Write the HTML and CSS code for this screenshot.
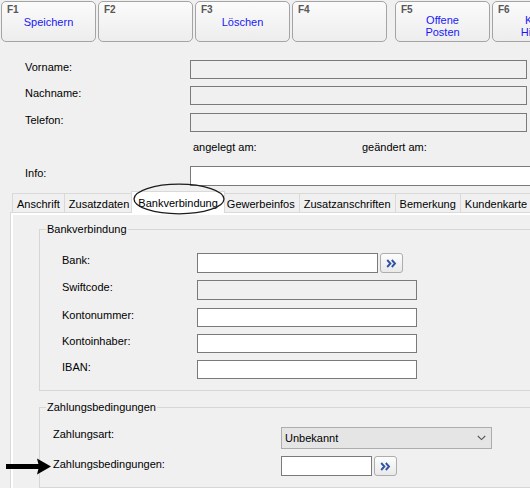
FILE: index.html
```html
<!DOCTYPE html>
<html lang="de">
<head>
<meta charset="utf-8">
<title>Kunde</title>
<link rel="stylesheet" href="styles.css">
</head>
<body>
<div class="toolbar">
  <div class="fbtn"><span class="fkey">F1</span><span class="flabel">Speichern</span></div>
  <div class="fbtn"><span class="fkey">F2</span></div>
  <div class="fbtn"><span class="fkey">F3</span><span class="flabel">Löschen</span></div>
  <div class="fbtn"><span class="fkey">F4</span></div>
  <div class="fbtn sep"><span class="fkey">F5</span><span class="flabel two">Offene<br>Posten</span></div>
  <div class="fbtn"><span class="fkey">F6</span><span class="flabel two">Konto<br>Historie</span></div>
</div>

<div class="head">
  <div class="row"><span class="lbl">Vorname:</span><input class="box ro w-head" type="text"></div>
  <div class="row m7"><span class="lbl">Nachname:</span><input class="box ro w-head" type="text"></div>
  <div class="row m8"><span class="lbl">Telefon:</span><input class="box ro w-head" type="text"></div>
  <div class="row dates"><span class="date">angelegt am:</span><span>geändert am:</span></div>
  <div class="row info"><span class="lbl">Info:</span><input class="box h20 w-info" type="text"></div>
</div>

<div class="tabs">
  <div class="tabstrip">
    <div class="tab">Anschrift</div>
    <div class="tab">Zusatzdaten</div>
    <div class="tab active">Bankverbindung
      <svg class="ring" width="92" height="32" viewBox="0 0 92 32"><ellipse cx="46" cy="16" rx="45" ry="14.8" fill="none" stroke="#1c1c1c" stroke-width="1.3"/></svg>
    </div>
    <div class="tab">Gewerbeinfos</div>
    <div class="tab">Zusatzanschriften</div>
    <div class="tab">Bemerkung</div>
    <div class="tab">Kundenkarte</div>
  </div>
  <div class="panel">
    <div class="page">
      <fieldset class="group g1">
        <legend>Bankverbindung</legend>
        <div class="row first"><span class="lbl">Bank:</span><input class="box h20 w-bank" type="text"><span class="more"><svg width="11" height="9" viewBox="0 0 11 9"><path d="M1.2 1 L4.4 4.5 L1.2 8 M5.8 1 L9 4.5 L5.8 8" fill="none" stroke="#3152a6" stroke-width="1.9"/></svg></span></div>
        <div class="row m7"><span class="lbl">Swiftcode:</span><input class="box ro h20 w-long" type="text"></div>
        <div class="row m8"><span class="lbl">Kontonummer:</span><input class="box w-long" type="text"></div>
        <div class="row m7"><span class="lbl">Kontoinhaber:</span><input class="box w-long" type="text"></div>
        <div class="row m7"><span class="lbl">IBAN:</span><input class="box w-long" type="text"></div>
      </fieldset>
      <fieldset class="group g2">
        <legend>Zahlungsbedingungen</legend>
        <div class="row first"><span class="lbl">Zahlungsart:</span><div class="combo"><span>Unbekannt</span><svg width="9" height="6" viewBox="0 0 9 6"><path d="M0.8 1 L4.5 4.6 L8.2 1" fill="none" stroke="#555" stroke-width="1.1"/></svg></div></div>
        <div class="row m7 marked"><span class="lbl low">Zahlungsbedingungen:</span><input class="box h20 w-short" type="text"><span class="more"><svg width="11" height="9" viewBox="0 0 11 9"><path d="M1.2 1 L4.4 4.5 L1.2 8 M5.8 1 L9 4.5 L5.8 8" fill="none" stroke="#3152a6" stroke-width="1.9"/></svg></span>
          <svg class="arrow" width="47" height="17" viewBox="0 0 47 17"><rect x="1" y="6" width="34" height="5" fill="#000"/><polygon points="32,0.5 46,8.5 32,16.5 34,8.5" fill="#000"/></svg>
        </div>
      </fieldset>
    </div>
  </div>
</div>
</body>
</html>
```

FILE: styles.css
```css
html, body {
  margin: 0;
  overflow: hidden;
}

body {
  width: 530px;
  height: 488px;
  background: #f0f0f0;
  color: #000;
  font-family: "Liberation Sans", Arial, sans-serif;
  font-size: 11px;
  line-height: 12px;
}

/* ---------- function key toolbar ---------- */
.toolbar {
  display: flex;
  gap: 2px;
  padding: 1px 0 0 1px;
}

.fbtn {
  flex: none;
  width: 95px;
  height: 41px;
  box-sizing: border-box;
  border: 1px solid #a4a4a4;
  border-radius: 5px;
  background: linear-gradient(#fbfbfb, #ededed);
  display: flex;
  flex-direction: column;
  align-items: center;
  padding-top: 2px;
}

.fbtn.sep {
  margin-left: 6px;
}

.fkey {
  align-self: flex-start;
  margin-left: 5px;
  font-size: 10px;
  font-weight: bold;
  color: #575757;
  line-height: 12px;
}

.flabel {
  color: #1818f5;
  text-align: center;
  line-height: 12px;
  white-space: nowrap;
}

.flabel.two {
  margin-top: -2px;
}

/* ---------- header fields ---------- */
.head {
  margin-top: 18px;
  padding-left: 25px;
}

.row {
  display: flex;
  align-items: flex-start;
}

.m7 { margin-top: 7px; }
.m8 { margin-top: 8px; }

.lbl {
  flex: none;
  padding-top: 1px;
  white-space: nowrap;
}

.head .lbl {
  width: 165px;
}

.dates {
  margin-top: 9px;
  padding-left: 168px;
}

.date {
  width: 169px;
}

.info {
  margin-top: 13px;
}

.box {
  display: block;
  flex: none;
  box-sizing: border-box;
  height: 19px;
  margin: 0;
  padding: 0;
  border: 1px solid #7a7a7a;
  border-radius: 0;
  background: #fff;
  font: inherit;
  outline: none;
}

.box.ro {
  background: #f0f0f0;
}

.box.h20 {
  height: 20px;
}

.w-head { width: 337px; }
.w-info { width: 400px; }
.w-bank { width: 181px; }
.w-long { width: 220px; }
.w-short { width: 91px; }

/* ---------- tabs ---------- */
.tabs {
  margin-top: 5px;
  margin-left: 10px;
}

.tabstrip {
  display: flex;
  align-items: flex-end;
  padding-left: 2px;
  position: relative;
  z-index: 2;
}

.tab {
  flex: none;
  height: 19px;
  box-sizing: border-box;
  border: 1px solid #d9d9d9;
  border-bottom: 0;
  padding: 4px 4px 0;
  background: #f0f0f0;
  white-space: nowrap;
}

.tab + .tab {
  margin-left: -1px;
}

.tab.active {
  position: relative;
  z-index: 1;
  height: 22px;
  margin: 0 -2px -1px -3px;
  padding: 5px 6px 0;
  background: #fff;
}

.ring {
  position: absolute;
  left: 1px;
  top: -9px;
  overflow: visible;
}

.panel {
  width: 600px;
  height: 320px;
  border: 1px solid #d9d9d9;
  background: #fff;
  padding: 2px;
}

.page {
  height: 100%;
  box-sizing: border-box;
  background: #f0f0f0;
  padding-top: 8px;
}

/* ---------- group boxes ---------- */
.group {
  width: 540px;
  min-width: 0;
  margin: 0 0 0 26px;
  padding: 0 0 11px;
  border: 1px solid #d6d6d6;
}

.group legend {
  margin-left: 6px;
  padding: 0 1px;
  line-height: 13px;
}

.g1 .row {
  padding-left: 22px;
}

.g1 .lbl {
  width: 135px;
}

.g1 .first {
  margin-top: 17px;
}

.g2 {
  margin-top: 10px;
}

.g2 .row {
  padding-left: 13px;
}

.g2 .lbl {
  width: 228px;
}

.g2 .lbl.low {
  padding-top: 2px;
}

.g2 .first {
  margin-top: 13px;
}

.more {
  flex: none;
  width: 23px;
  height: 20px;
  box-sizing: border-box;
  margin-left: 2px;
  border: 1px solid #adadad;
  border-radius: 3px;
  background: linear-gradient(#fdfdfd, #e9e9e9);
  display: flex;
  align-items: center;
  justify-content: center;
}

.combo {
  flex: none;
  width: 211px;
  height: 22px;
  box-sizing: border-box;
  border: 1px solid #adadad;
  background: #e5e5e5;
  display: flex;
  align-items: center;
  justify-content: space-between;
  padding: 0 5px 0 3px;
}

.marked {
  position: relative;
}

.arrow {
  position: absolute;
  left: -35px;
  top: 2px;
}
```
